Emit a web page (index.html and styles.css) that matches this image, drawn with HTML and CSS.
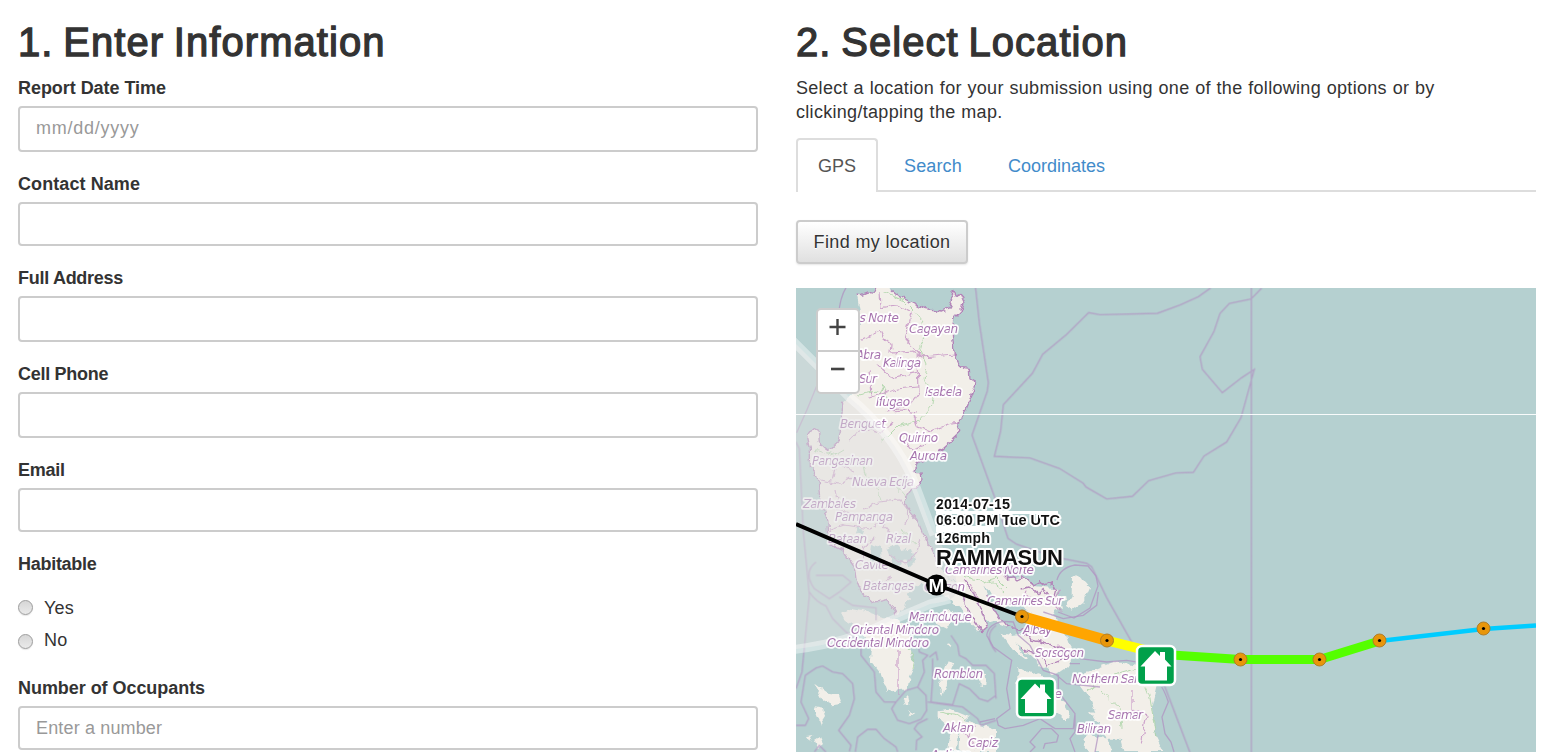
FILE: index.html
```html
<!DOCTYPE html>
<html lang="en">
<head>
<meta charset="utf-8">
<title>Report</title>
<link rel="stylesheet" href="styles.css">
</head>
<body>
<main class="page">
  <form class="col">
    <h1 class="title title-info">1. Enter Information</h1>
    <div class="group"><label class="label">Report Date Time</label><input class="input tall date" placeholder="mm/dd/yyyy"></div>
    <div class="group"><label class="label wide">Contact Name</label><input class="input"></div>
    <div class="group"><label class="label narrow">Full Address</label><input class="input tall"></div>
    <div class="group"><label class="label narrow">Cell Phone</label><input class="input tall"></div>
    <div class="group"><label class="label narrow">Email</label><input class="input"></div>
    <div class="group radios">
      <span class="label narrow">Habitable</span>
      <label class="radio"><span class="dot"></span><span class="yes">Yes</span></label>
      <label class="radio second"><span class="dot"></span><span>No</span></label>
    </div>
    <div class="group"><label class="label">Number of Occupants</label><input class="input number" placeholder="Enter a number"></div>
  </form>
  <section class="col">
    <h1 class="title title-loc">2. Select Location</h1>
    <p class="intro">Select a location for your submission using one of the following options or by<br>clicking/tapping the map.</p>
    <nav class="tabs">
      <a class="tab active">GPS</a><a class="tab search">Search</a><a class="tab coords">Coordinates</a>
    </nav>
    <button class="btn" type="button">Find my location</button>
    <div class="map">
      <svg class="canvas" width="740" height="464" viewBox="796 288 740 464">
        <defs>
          <filter id="rough" filterUnits="userSpaceOnUse" x="780" y="270" width="780" height="500">
            <feTurbulence type="fractalNoise" baseFrequency=".14" numOctaves="2" seed="4"/>
            <feDisplacementMap in="SourceGraphic" scale="7" xChannelSelector="R" yChannelSelector="G"/>
          </filter>
        </defs>
        <rect x="796" y="288" width="740" height="464" fill="#b5d0d0"/>
        <g filter="url(#rough)">
        <!-- land -->
        <g class="land">
          <path transform="translate(796 286) scale(.33333)" d="M182 24L195 26 215 18 232 22 240 0H262L285 12 310 32 345 48 385 68 420 72 440 75 462 65 470 45 465 28 470 12 478 28 492 22 504 48 500 70 475 95 468 130 472 175 475 205 490 235 505 248 520 250 522 282 540 292 528 325 508 372 490 405 486 425 488 440 475 452 462 470 440 490 400 515 365 530 352 560 375 560 378 580 362 605 345 612 325 640 335 668 362 700 380 740 405 790 430 840 460 880 500 930 540 960 565 1000 568 1025 550 1035 525 1010 490 965 450 930 400 900 375 890 340 925 325 975 300 985 275 940 230 950 195 920 180 880 175 840 140 790 100 770 95 700 72 650 68 600 60 560 40 540 40 490 32 455 50 428 68 438 70 470 100 495 125 470 135 430 140 350 170 320 185 150 195 90Z"/>
          <path transform="translate(920 480) scale(.33333)" d="M70 275L130 265 180 280 240 270 262 295 310 292 340 318 412 325 408 350 435 345 438 362 400 375 430 380 400 395 440 470 450 500 465 525 442 560 405 585 370 560 300 500 260 470 330 460 350 420 300 370 250 380 220 345 190 320 230 400 260 440 180 410 140 370 150 350 100 310ZM456 290L470 280 508 325 490 365 455 392 442 370 455 350ZM130 300L165 345 185 390 202 440 185 455 160 420 130 355Z"/>
          <path transform="translate(980 592) scale(.33333)" d="M62 122L92 130 120 175 145 200 140 205 95 170ZM115 225L155 245 180 240 225 290 268 365 260 388 230 360 195 330 170 345 130 370 115 300ZM285 255L400 210 490 220 530 280 515 340 525 430 550 480H430L420 440 380 440 350 370 325 310ZM330 360L355 365 368 385 355 395ZM330 430L385 440 395 480H325L310 440Z"/>
          <path transform="translate(796 592) scale(.33333)" d="M135 62L160 50 215 60 260 75 300 78 345 110 340 180 358 215 340 255 335 292 305 295 275 300 255 245 222 205 225 160 185 110 150 90ZM420 70L450 52 475 70 450 110 420 95ZM55 275L95 305 130 310 138 335 110 340 80 325ZM55 345L85 350 90 375 75 398ZM30 432L52 430 42 450ZM455 205L475 215 460 250 440 310 430 270ZM540 240L570 250 568 280 548 275ZM425 355L460 350 520 375 495 395 480 480H455L465 410 425 375ZM495 380L600 415V480H490ZM278 5L320 0 342 20 315 38 275 25ZM326 318l10-5 4 20-8 2zM336 360l22 3-10 7zM450 160l10-3-2 12z"/>
          <path d="M815 742l6-4 3 6-6 5zM1085 748l5-9 6 6-2 8z"/>
        </g>
        <path class="lagoon" d="M887 549l10-4 6 6 8-2 4 12-6 6-4-8-6 8-8-6zM858 527l6 4-2 5-6-4zM871 545l10 3 1 18-8 2-5-8z"/>
        <!-- rivers and province borders -->
        <g class="green">
          <path d="M884 292l20 9 11 11 8 10 1 14-4 14 6 14-2 16 10 12-2 14-12 14-20 5-12 12-8 4M877 404l6-18 4 14M858 395l24-5M816 450l18 6 10-6M862 460l3 15 12 10 4 16M893 484l11 12 4 18M845 515l15 7 12-8M900 530l16 14M964 576l18 6 14-4 10 10M990 580l14 12M908 650l7 9-2 9M1102 692l18 16 2 20M940 712l18 3 8 6M1088 690l16-12 34-10 12 30 6 40"/>
        </g>
        <g class="inner">
          <path d="M880 292l1 16 14-3 16 8-7 25 18 19 32-3M860 340l20-9 4 8 8 6-1 9 21-2 12 6M876 364l15 14 27-6M872 396l-2-27M918 358l1 34-9 12-24 8M869 398l28-9 20-2M914 415l4 12 12 4 22-8 9-1M886 412l14-2 16 3M850 440l10-12 20 6 12-12M905 440l8 10 12-4M820 480l20 4 14-8 12 8M832 480l4-16 18 6M835 490l4 20 17 5M864 510l14-8 22-2 8 10-2 15M830 530l14-5 26 4 12-6 12 14M876 538l-14 12 4 18M889 555l16 9 10-10 5-15M865 580l14 6 12-8M898 650v45M1060 590l-8 12 10 10M1133 690v20l14 4-6 30M950 732l12-4 14 20M966 738l10-12M1025 592l12 14M970 584l10 16M1046 655l12-10 14 12"/>
        </g>
        <g class="coast">
          <path transform="translate(796 286) scale(.33333)" d="M182 24L195 26 215 18 232 22 240 0M285 12L310 32 345 48 385 68 420 72 440 75 462 65 470 45 465 28 470 12 478 28 492 22 504 48 500 70 475 95 468 130 472 175 475 205 490 235 505 248 520 250 522 282 540 292 528 325 508 372 490 405 486 425 488 440 475 452 462 470 440 490 400 515 365 530 352 560 375 560 378 580 362 605 345 612 325 640 335 668 362 700 380 740 405 790 430 840M140 350L135 430 125 470 100 495 70 470 68 438 50 428 32 455 40 490 40 540 60 560 68 600 72 650 95 700 100 770 140 790 175 840 180 880 195 920 230 950 275 940 300 985"/>
          <path transform="translate(920 480) scale(.33333)" d="M240 270l22 25 20-5 12 10 16-8 30 26 20-10 15 10 20-10 12 22-5 20-20-6-15-15-15 10-25-18-25 6M130 300l35 45 20 45 17 50-17 15-25-35-30-65M200 345l30 55 30 40 50 10 25 30 40 10 60 20M300 500l60 30 20 28 50-20 35-20"/>
        </g>
        </g>
        <g class="boundary">
          <path transform="translate(950 286) scale(.33333)" d="M782 6L745 32 690 57 622 82 450 86 416 80 350 145 278 205 247 262 160 356 152 435 133 511 240 516 328 547 400 592 408 603 470 639 547 631 596 584 677 561 730 559 762 510 830 468 873 395 913 250 875 275 817 320 757 250 750 212 792 136 810 82 838 52 903 39 935 6M76 0L88 110 115 290 112 315 66 447 132 628 174 757 200 775 310 812 410 832 425 842 470 935 545 1068 645 1203 720 1400M904 0V1400"/>
          <path transform="translate(796 286) scale(.33333)" d="M150 5Q132 35 128 85M62 300Q35 370 2 440"/>
          <path transform="translate(796 592) scale(.33333)" d="M0 -450L10 -430 22 -180 40 10 18 240 0 290M40 0Q60 30 90 42L110 80 150 120 195 150 195 190 235 240 240 300 265 330 300 330 330 295 365 285 390 310 392 355 375 382 340 395 305 385 287 350 300 330M0 400H28L38 380 15 330 28 250 60 228 80 222 110 240 140 245 170 275 175 320 160 370 128 415 165 460 160 478M178 480L185 435 215 412 240 412 265 440 300 465 305 480M55 480l15-20 20 20M60 -90Q20 -60 55 -10L100 20 130 0 165 -30 140 -50 60 -50M365 285L385 240 380 205 395 190 370 180 365 140M400 195L420 180 425 205M410 200L410 260 405 330 470 338 490 275 520 290 550 320 575 328 600 310M465 130L485 160 490 190 510 200 530 220 570 220 595 245 600 320M395 330L430 335 500 345 545 380 555 400 600 385M395 380L365 395 355 410 378 435 362 445 360 475M600 100Q560 130 600 180M470 85L490 60M130 15L170 40 240 48 240 85"/>
          <path transform="translate(980 592) scale(.33333)" d="M190 60L250 80 310 70 350 40 355 0M20 130Q25 95 70 88L100 90 115 130 150 160 190 235 235 250 235 300 285 365 280 410 225 410 180 380 130 400 75 410 55 400 50 380 90 350 80 290 95 205 40 165 20 130M230 250L260 275 360 285M270 215L300 215M300 200L380 210 440 205 500 215M150 480L165 465 150 450 185 410 215 410 235 430 230 450 195 455 190 470M285 370L285 420 270 440 285 480M360 400L345 480M0 390L45 380M545 285Q555 300 565 330L546 375 555 425 573 450 582 480"/>
          <path d="M1057 580Q1060 568 1075 565L1088 566 1096 576 1098 586 1090 608 1074 618 1058 612"/>
        </g>
        <!-- place names under the swath -->
        <g class="names">
          <text x="840" y="428" textLength="46">Benguet</text>
          <text x="812" y="465" textLength="61">Pangasinan</text>
          <text x="852" y="485.5" textLength="62">Nueva Ecija</text>
          <text x="803" y="507.500" textLength="53">Zambales</text>
          <text x="835" y="520.500" textLength="58">Pampanga</text>
          <text x="828" y="543" textLength="39">Bataan</text>
          <text x="886" y="543" textLength="25">Rizal</text>
          <text x="855" y="569" textLength="34">Cavite</text>
          <text x="863" y="589.500" textLength="51">Batangas</text>
          <text x="924" y="590.500" textLength="41">Quezon</text>
        </g>
        <path class="swath" d="M796 344L848 396C878 421 900 448 914 482L932 530C944 548 957 570 957 588C957 600 945 602 930 604L890 621C860 637 830 645 796 649Z"/>
        <path class="swath-edge" d="M790 338L848 396C878 421 900 448 914 482L934 535M950 599L930 604L890 621C860 637 830 645 790 650"/>
        <g class="names">
          <text x="847" y="322" textLength="52">cos Norte</text>
          <text x="909" y="332.500" textLength="49">Cagayan</text>
          <text x="856" y="359" textLength="25">Abra</text>
          <text x="883" y="367" textLength="38">Kalinga</text>
          <text x="859" y="383" textLength="18">Sur</text>
          <text x="876" y="406" textLength="34">Ifugao</text>
          <text x="925" y="395.500" textLength="37">Isabela</text>
          <text x="899" y="442" textLength="39">Quirino</text>
          <text x="910" y="459.500" textLength="37">Aurora</text>
          <text x="909" y="621" textLength="63">Marinduque</text>
          <text x="851" y="634" textLength="88">Oriental Mindoro</text>
          <text x="827" y="647" textLength="102">Occidental Mindoro</text>
          <text x="934" y="678" textLength="49">Romblon</text>
          <text x="943" y="731.500" textLength="31">Aklan</text>
          <text x="968" y="747" textLength="30">Capiz</text>
          <text x="931" y="758.500" textLength="40">Antique</text>
          <text x="945" y="574" textLength="89">Camarines Norte</text>
          <text x="987" y="605" textLength="76">Camarines Sur</text>
          <text x="1023" y="633.500" textLength="29">Albay</text>
          <text x="1035" y="657" textLength="49">Sorsogon</text>
          <text x="1072" y="683" textLength="84">Northern Samar</text>
          <text x="1018" y="698" textLength="44">Masbate</text>
          <text x="1108" y="719" textLength="35">Samar</text>
          <text x="1077" y="733" textLength="34">Biliran</text>
        </g>
        <path d="M796 414.500H1536" stroke="#fff" stroke-opacity=".9"/>
        <!-- storm track -->
        <g fill="none">
          <path d="M796 524L936 584.500 1022 616.500" stroke="#000" stroke-width="4"/>
          <path d="M1107 640.500L1157 653" stroke="#ff0" stroke-width="10"/>
          <path d="M1022 616.500L1107 640.500" stroke="#ffa500" stroke-width="11"/>
          <path d="M1157 654L1240.500 659.500H1319.500L1379.500 641" stroke="#5f0" stroke-width="9"/>
          <path d="M1379.500 641L1483.500 629 1536 625.500" stroke="#0cf" stroke-width="4.500"/>
        </g>
        <g class="points">
          <circle cx="1022" cy="616.500" r="6.500"/><circle cx="1107" cy="640.500" r="6.500"/><circle cx="1240.500" cy="659.500" r="6.500"/><circle cx="1319.500" cy="659.500" r="6.500"/><circle cx="1379.500" cy="640.500" r="6.500"/><circle cx="1483.500" cy="628.500" r="6.500"/>
        </g>
        <g fill="#000">
          <circle cx="1022" cy="616.500" r="1.600"/><circle cx="1107" cy="640.500" r="1.600"/><circle cx="1240.500" cy="659.500" r="1.600"/><circle cx="1319.500" cy="659.500" r="1.600"/><circle cx="1379.500" cy="640.500" r="1.600"/><circle cx="1483.500" cy="628.500" r="1.600"/>
        </g>
        <circle cx="936.500" cy="585" r="10.500"/>
        <text class="eye" x="936.500" y="592" text-anchor="middle">M</text>
        <g class="storm">
          <rect x="936" y="511" width="122" height="3"/>
          <rect x="936" y="526" width="58" height="6"/>
          <text class="storm-name" x="936" y="565" textLength="127">RAMMASUN</text>
          <text x="936" y="543" textLength="54">126mph</text>
          <text x="936" y="525" textLength="124">06:00 PM Tue UTC</text>
          <text x="936" y="509" textLength="74">2014-07-15</text>
        </g>
        <!-- shelters -->
        <g id="shelter">
          <rect x="1017" y="678.500" width="38" height="39" rx="5" fill="#00a04a" stroke="#fff" stroke-width="2.500"/>
          <path fill="#fff" d="M1035 683.500L1040 688.500V684.500H1045V692L1051.500 699H1047V713H1025V699H1020.500Z"/>
        </g>
        <use href="#shelter" x="120" y="-32.500"/>
      </svg>
      <div class="zoom"><a class="zoom-btn"><svg width="20" height="20"><path d="M1.500 9H17.500M9.500 1V17" stroke="#444" stroke-width="2.400"/></svg></a><a class="zoom-btn out"><svg width="20" height="20"><path d="M3 9H16.500" stroke="#444" stroke-width="2.600"/></svg></a></div>
    </div>
  </section>
</main>
</body>
</html>
```
FILE: styles.css
```css
* { box-sizing: border-box; }
body { margin: 0; background: #fff; color: #333; font: 18px/24px "Liberation Sans", Arial, sans-serif; }
.page { display: grid; grid-template-columns: 740px 740px; gap: 38px; height: 752px; padding: 0 18px; overflow: hidden; }
.title { margin: 20px 0 12px; font-size: 40px; line-height: 44px; font-weight: 400; letter-spacing: 1.05px; word-spacing: -2.4px; white-space: nowrap; -webkit-text-stroke: 1.3px #333; }
.group { display: flex; flex-direction: column; margin-bottom: 20px; }
.label { height: 24px; margin-bottom: 6px; font-weight: 700; letter-spacing: -.05px; }
.wide { letter-spacing: .08px; }
.narrow { letter-spacing: -.28px; }
.input { width: 100%; height: 44px; padding: 0 16px 2px; border: 2px solid #ccc; border-radius: 4px; background: #fff; font: inherit; color: #555; outline: none; }
.tall { height: 46px; }
.date { letter-spacing: .75px; }
.number { padding-bottom: 0; letter-spacing: .15px; }
.input::placeholder { color: #999; opacity: 1; }
.radios { height: 104px; }
.radio { display: flex; align-items: center; gap: 11px; height: 24px; margin-top: 14px; letter-spacing: .2px; }
.second { margin-top: 8px; }
.dot { width: 15px; height: 15px; margin-top: -1px; border: 1px solid #9c9c9c; border-radius: 50%; background: linear-gradient(#d6d6d6, #eaeaea); box-shadow: 0 1px 1px rgba(0,0,0,.1); }
.second .dot { margin-top: 2px; }
.intro { margin: 0 0 14px; letter-spacing: .3px; word-spacing: .45px; white-space: nowrap; }
.tabs { display: flex; height: 54px; margin-bottom: 28px; border-bottom: 2px solid #ddd; }
.tab { height: 52px; padding: 16px 22px 0; margin-right: 4px; color: #428bca; white-space: nowrap; }
.active { width: 82px; height: 54px; padding: 14px 0 0 20px; border: 2px solid #ddd; border-bottom: 0; border-radius: 4px 4px 0 0; background: #fff; color: #555; }
.search { width: 100px; letter-spacing: .15px; }
.btn { display: block; width: 172px; height: 44px; margin: 0 0 24px; padding: 0; border: 2px solid #ccc; border-radius: 4px; background: linear-gradient(#fff, #e0e0e0); box-shadow: 0 1px 2px rgba(0,0,0,.1); color: #333; font: inherit; letter-spacing: .36px; text-shadow: 0 1px 0 #fff; }
.map { position: relative; height: 464px; overflow: hidden; }
.canvas { display: block; }
.zoom { position: absolute; left: 20px; top: 20px; width: 44px; height: 86px; border: 2px solid #ccc; border-radius: 5px; background: #fff; }
.zoom-btn { display: flex; justify-content: center; padding-top: 8px; height: 40px; }
.out { border-top: 2px solid #ccc; }
.land { fill: #f2efe9; }
.lagoon { fill: #b5d0d0; }
.green { fill: none; stroke: #add5a8; stroke-width: 1; stroke-opacity: .85; }
.inner { fill: none; stroke: #c795c6; stroke-width: 1.2; stroke-opacity: .85; }
.coast { fill: none; stroke: #b283b8; stroke-width: 4; stroke-linejoin: round; }
.boundary { fill: none; stroke: #b093c2; stroke-width: 4; stroke-opacity: .75; }
.boundary path:last-child { stroke-width: 1.3; }
.names { font: italic 12px "DejaVu Sans", sans-serif; fill: #a673ae; stroke: #fff; stroke-opacity: .9; stroke-width: 3.5px; stroke-linejoin: round; paint-order: stroke; }
.swath { fill: #e0e0e0; fill-opacity: .5; }
.swath-edge { fill: none; stroke: #fff; stroke-opacity: .4; stroke-width: 9; }
.points { fill: #e8960a; stroke: #b07c26; stroke-width: 1; }
.eye { font: bold 19px "Liberation Sans", sans-serif; fill: #fff; stroke: #000; stroke-width: 2px; paint-order: stroke; }
.storm { font: bold 14.5px "Liberation Sans", sans-serif; fill: #111; stroke: #fff; stroke-width: 4px; stroke-linejoin: round; paint-order: stroke; }
.storm rect { fill: #fff; stroke: none; }
.storm-name { font-size: 22px; }
text { white-space: pre; }
```
